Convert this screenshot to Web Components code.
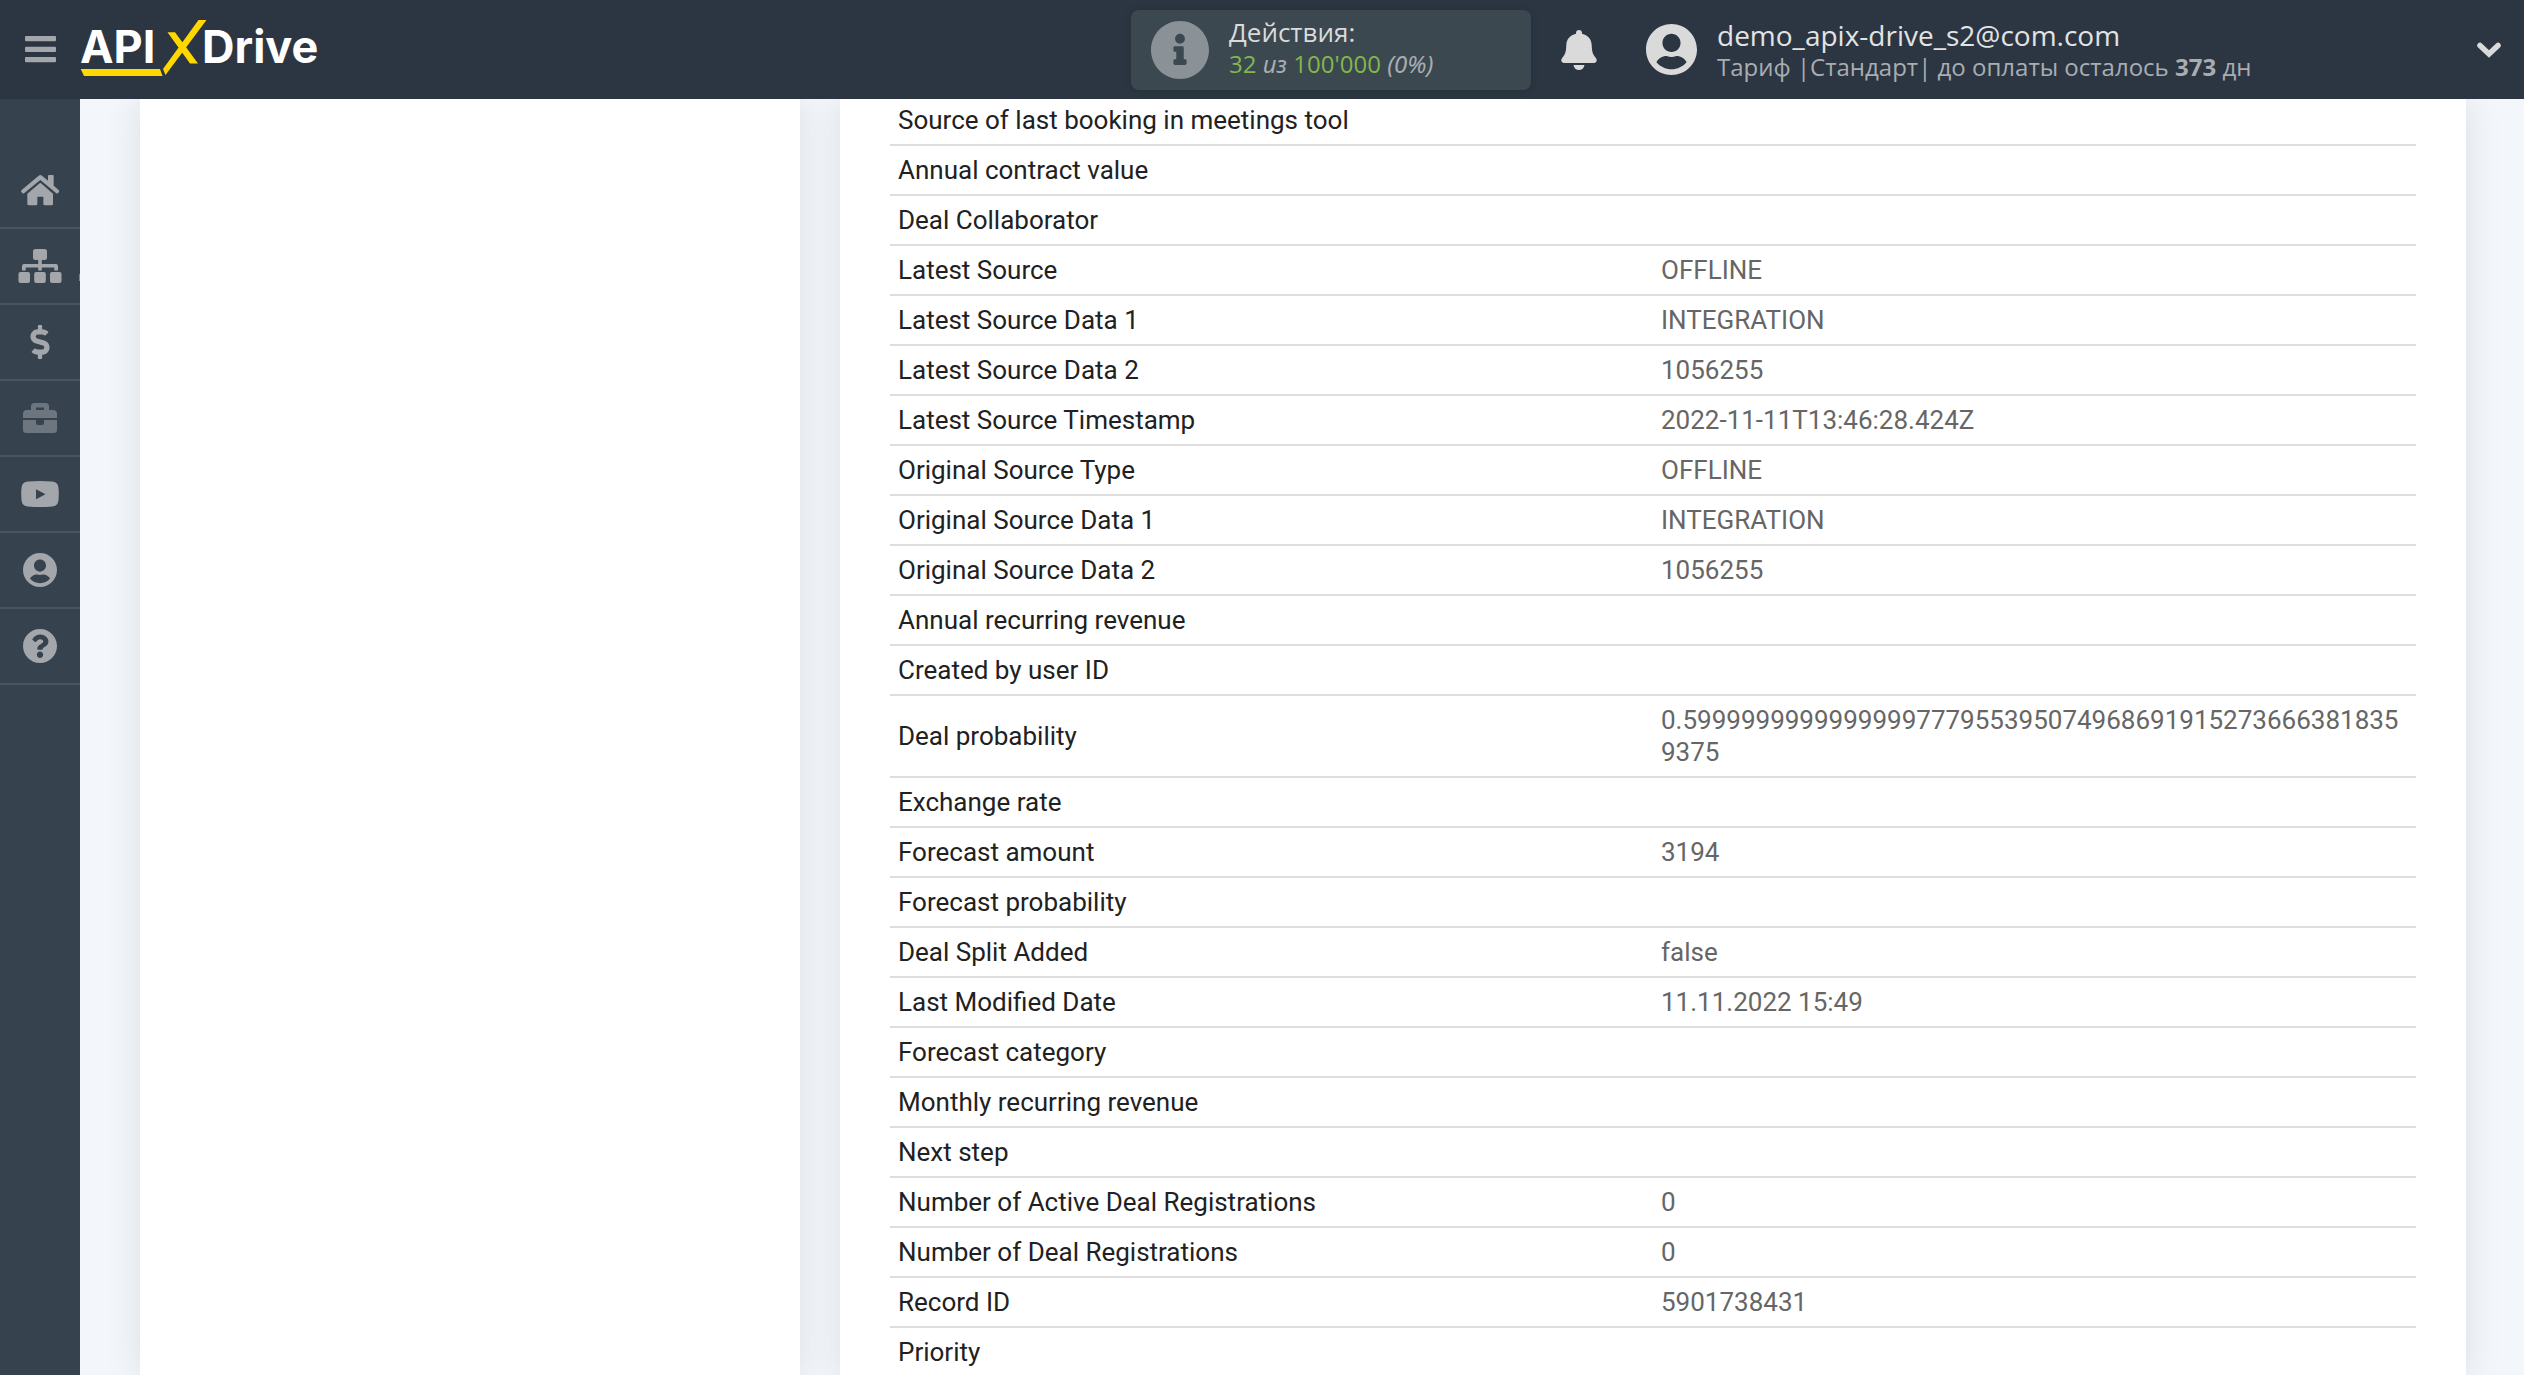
<!DOCTYPE html>
<html lang="ru">
<head>
<meta charset="utf-8">
<title>ApiX-Drive</title>
<style>
html, body { margin: 0; height: 100%; }
body { overflow: hidden; background: #f3f6fb; font-family: "Open Sans", "Noto Sans", sans-serif; }
</style>
</head>
<body>
<app-shell>
  <app-header slot="header"></app-header>
  <app-sidebar slot="sidebar"></app-sidebar>
  <app-card></app-card>
  <app-card><deal-table></deal-table></app-card>
</app-shell>

<script>
const ICONS = {
  user: '<svg viewBox="0 8 496 496"><path d="M248 8C111 8 0 119 0 256s111 248 248 248 248-111 248-248S385 8 248 8zm0 96c48.600 0 88 39.400 88 88s-39.400 88-88 88-88-39.400-88-88 39.400-88 88-88zm0 344c-58.700 0-111.300-26.600-146.500-68.200 18.800-35.400 55.600-59.800 98.500-59.800 2.400 0 4.800.4 7.100 1.100 13 4.200 26.600 6.900 40.900 6.900 14.300 0 28-2.700 40.900-6.900 2.300-.7 4.700-1.100 7.100-1.100 42.900 0 79.700 24.400 98.500 59.800C359.300 421.400 306.700 448 248 448z"/></svg>',
  info: '<svg viewBox="8 8 496 496"><path d="M256 8C119.043 8 8 119.083 8 256c0 136.997 111.043 248 248 248s248-111.003 248-248C504 119.083 392.957 8 256 8zm0 110c23.196 0 42 18.804 42 42s-18.804 42-42 42-42-18.804-42-42 18.804-42 42-42zm56 254c0 6.627-5.373 12-12 12h-88c-6.627 0-12-5.373-12-12v-24c0-6.627 5.373-12 12-12h12v-64h-12c-6.627 0-12-5.373-12-12v-24c0-6.627 5.373-12 12-12h64c6.627 0 12 5.373 12 12v100h12c6.627 0 12 5.373 12 12v24z"/></svg>',
  help: '<svg viewBox="8 8 496 496"><path d="M504 256c0 136.997-111.043 248-248 248S8 392.997 8 256C8 119.083 119.043 8 256 8s248 111.083 248 248zM262.655 90c-54.497 0-89.255 22.957-116.549 63.758-3.536 5.286-2.353 12.415 2.715 16.258l34.699 26.310c5.205 3.947 12.621 3.008 16.665-2.122 17.864-22.658 30.113-35.797 57.303-35.797 20.429 0 45.698 13.148 45.698 32.958 0 14.976-12.363 22.667-32.534 33.976C247.128 238.528 216 254.941 216 296v4c0 6.627 5.373 12 12 12h56c6.627 0 12-5.373 12-12v-1.333c0-28.462 83.186-29.647 83.186-106.667 0-58.002-60.165-102-116.531-102zM256 338c-25.365 0-46 20.635-46 46 0 25.364 20.635 46 46 46s46-20.636 46-46c0-25.365-20.635-46-46-46z"/></svg>',
  home: '<svg viewBox="60 522 120 96"><path d="M144 528q0-3 3-3h11q3 0 3 3v29l15 13q3 3 1 6l-3 3q-3 3-6 0L121 540 73 579q-3 3-6 0l-3-3q-2-3 1-6L116 527q5-4 10 0l18 15z"/><path d="M82 581L119 550q2-2 4 0l36 31v31q0 4-4 4h-21q-4 0-4-4v-22h-18v22q0 4-4 4H86q-4 0-4-4z"/></svg>',
  sitemap: '<svg viewBox="0 0 44 36"><rect x="15" y="1" width="14" height="11" rx="2.500"/><rect x=".5" y="24" width="11.500" height="11" rx="2"/><rect x="16.200" y="24" width="11.600" height="11" rx="2"/><rect x="32" y="24" width="11.500" height="11" rx="2"/><path d="M20.200 11h3.600v5H38q2 0 2 2v4.500h-3.700V19.500H23.800v3h-3.600v-3H7.700v3H4V18q0-2 2-2h14.200z"/></svg>',
  dollar: '<svg viewBox="0 0 288 512"><path d="M209.200 233.400l-108-31.600C88.700 198.200 80 186.500 80 173.500c0-16.300 13.200-29.500 29.500-29.500h66.300c12.200 0 24.200 3.700 34.200 10.500 6.100 4.100 14.300 3.100 19.500-2l34.800-34c7.100-6.900 6.100-18.400-1.800-24.500C238 74.800 207.400 64.100 176 64V16c0-8.800-7.200-16-16-16h-32c-8.800 0-16 7.200-16 16v48h-2.500C45.800 64-5.400 118.700.5 183.600c4.200 46.100 39.400 83.600 83.800 96.600l102.500 30c12.500 3.700 21.200 15.300 21.200 28.300 0 16.300-13.200 29.500-29.500 29.500h-66.300C100 368 88 364.300 78 357.500c-6.100-4.100-14.300-3.100-19.500 2l-34.800 34c-7.100 6.900-6.100 18.400 1.800 24.500 24.500 19.200 55.100 29.900 86.500 30v48c0 8.800 7.200 16 16 16h32c8.800 0 16-7.200 16-16v-48.200c46.600-.9 90.300-28.600 105.700-72.700 21.500-61.600-14.600-124.800-72.500-141.700z"/></svg>',
  toolbox: '<svg viewBox="0 0 34 30"><path fill-rule="evenodd" d="M8 7V3.500Q8 0 11.500 0h11Q26 0 26 3.500V7h4q4 0 4 4v4H0v-4q0-4 4-4zM13 4.500V7h8V4.500z"/><path d="M0 17h13v3q0 2 2 2h4q2 0 2-2v-3h13v10q0 3-3 3H3q-3 0-3-3z"/></svg>',
  video: '<svg viewBox="0 0 38 26"><path fill-rule="evenodd" d="M7 .6Q19-.4 31 .6q6 .4 6.400 6 .8 6.400 0 12.800-.4 5.600-6.400 6-12 1-24 0-6-.4-6.400-6-.8-6.400 0-12.800Q1 1 7 .6zM15 8.200v10l9.500-5z"/></svg>',
  bell: '<svg viewBox="0 0 36 40"><path d="M18 0c1.800 0 3 1.200 3 2.800v1C27 5.200 30.500 9.500 30.700 15c.3 7 1 9.500 4 12.700 1.700 2 1.400 5.300-1.900 5.300H3.200C-.1 33-.4 29.700 1.300 27.700c3-3.200 3.700-5.700 4-12.700C5.500 9.500 9 5.200 15 3.800v-1C15 1.200 16.200 0 18 0zM12.500 35h11c-.4 3-2.600 5-5.500 5s-5.100-2-5.500-5z"/></svg>',
  bars: '<svg viewBox="0 0 31 27"><rect width="31" height="5.300" rx="1"/><rect y="10.700" width="31" height="5.300" rx="1"/><rect y="21" width="31" height="5.300" rx="1"/></svg>',
  chevron: '<svg viewBox="0 0 26 17"><path d="M4 4.500l9 8.500 9-8.500" fill="none" stroke="currentColor" stroke-width="5.500" stroke-linecap="round"/></svg>'
};

class AppShell extends HTMLElement {
  constructor() {
    super();
    this.attachShadow({ mode: 'open' }).innerHTML = `
      <style>
        :host { display: flex; flex-direction: column; height: 100vh; }
        .body { flex: 1; min-height: 0; display: flex; }
        main { flex: 1; min-width: 0; overflow: hidden; display: grid;
          grid-template-columns: minmax(0, 660px) minmax(0, 1fr); gap: 40px; padding: 0 58px 0 60px; }
      </style>
      <slot name="header"></slot>
      <div class="body"><slot name="sidebar"></slot><main><slot></slot></main></div>`;
  }
}

class AppHeader extends HTMLElement {
  constructor() {
    super();
    this.attachShadow({ mode: 'open' }).innerHTML = `
      <style>
        :host { display: block; background: #2b3642; color: #dadada; }
        header { display: grid; grid-template-columns: 1131fr 400px 993fr; align-items: center; height: 99px; }
        svg { display: block; fill: currentColor; }
        button { display: block; margin: 0; padding: 0; border: 0; background: none; color: inherit; font: inherit; cursor: pointer; }
        .left { display: flex; align-items: center; gap: 24px; padding-left: 25px; }
        .menu { color: #a3a7ab; } .menu svg { width: 31px; height: 27px; }
        .logo svg { width: 246px; height: 60px; }
        .limits { display: flex; align-items: center; gap: 20px; box-sizing: border-box; height: 80px; padding-left: 20px;
          background: #3b4850; border-radius: 8px; box-shadow: 0 0 8px rgba(0,0,0,.12); }
        .limits svg { width: 58px; height: 58px; color: #8a9197; }
        .limits div { padding-bottom: 4px; }
        p { margin: 0; white-space: nowrap; line-height: 32px; }
        .title { font-size: 26px; }
        .sub { font-size: 24px; color: #a9adb1; }
        .sub b.n { font-weight: 400; color: #82b74b; }
        .sub i { font-family: "Noto Sans", sans-serif; }
        .right { display: flex; align-items: center; padding: 0 22px 0 30px; }
        .bell svg { width: 36px; height: 40px; }
        .user { display: flex; align-items: center; gap: 20px; margin-left: 49px; color: #e2e3e4; text-decoration: none; }
        .user svg { width: 51px; height: 51px; color: #dadada; }
        .user div { padding-top: 2px; }
        .user .title { font-size: 28px; }
        .more { margin-left: auto; } .more svg { width: 26px; height: 17px; }
      </style>
      <header>
        <div class="left">
          <button class="menu" aria-label="Меню">${ICONS.bars}</button>
          <a class="logo" href="#" aria-label="APIXDrive">
            <svg viewBox="80 19 246 60">
              <g fill="#fff" font-family="Inter, sans-serif" font-weight="700" font-size="45">
                <text x="80" y="62">API</text><text x="202" y="62">Drive</text>
              </g>
              <path fill="#ffd800" d="M80.700 68H160l2.500 7H84zM198.500 19h8L165.500 74l-2.500-6zM167.500 31.300h7.500L198 62.500h-8z"/>
            </svg>
          </a>
        </div>
        <div class="limits">${ICONS.info}
          <div><p class="title">Действия:</p><p class="sub"><b class="n">32</b> <i>из</i> <b class="n">100'000</b> <i>(0%)</i></p></div>
        </div>
        <div class="right">
          <button class="bell" aria-label="Уведомления">${ICONS.bell}</button>
          <a class="user" href="#">${ICONS.user}
            <div><p class="title">demo_apix-drive_s2@com.com</p><p class="sub">Тариф |Стандарт| до оплаты осталось <b>373</b> дн</p></div>
          </a>
          <button class="more" aria-label="Ещё">${ICONS.chevron}</button>
        </div>
      </header>`;
  }
}

class AppSidebar extends HTMLElement {
  constructor() {
    super();
    const items = [['home','Главная',40,32],['sitemap','Связи',44,36],['dollar','Оплата',20,34],['toolbox','Инструменты',34,30],
      ['video','Видео',38,26],['user','Профиль',34,34],['help','Помощь',34,34]];
    this.attachShadow({ mode: 'open' }).innerHTML = `
      <style>
        :host { display: block; flex: none; width: 80px; background: #37424f; }
        nav { display: flex; flex-direction: column; padding-top: 54px; }
        a { position: relative; display: flex; align-items: center; justify-content: center; height: 74px; border-bottom: 2px solid #4a5562; color: #a3a7ab; }
        svg { display: block; fill: currentColor; }
        .toolbox { color: #6d757e; }
        .sitemap::after { content: ""; position: absolute; right: 0; top: 45px; width: 1px; height: 7px; background: #7b838b; }
      </style>
      <nav>${items.map(([k, label, w, h]) =>
        `<a class="${k}" href="#" aria-label="${label}">${ICONS[k].replace('<svg', `<svg width="${w}" height="${h}"`)}</a>`).join('')}</nav>`;
  }
}

class AppCard extends HTMLElement {
  constructor() {
    super();
    this.attachShadow({ mode: 'open' }).innerHTML = `
      <style>:host { display: block; min-width: 0; padding: 0 50px; background: #fff; box-shadow: 0 0 35px rgba(0,0,0,.1); }</style>
      <slot></slot>`;
  }
}

const ROWS = [
  ['Source of last booking in meetings tool', ''],
  ['Annual contract value', ''],
  ['Deal Collaborator', ''],
  ['Latest Source', 'OFFLINE'],
  ['Latest Source Data 1', 'INTEGRATION'],
  ['Latest Source Data 2', '1056255'],
  ['Latest Source Timestamp', '2022-11-11T13:46:28.424Z'],
  ['Original Source Type', 'OFFLINE'],
  ['Original Source Data 1', 'INTEGRATION'],
  ['Original Source Data 2', '1056255'],
  ['Annual recurring revenue', ''],
  ['Created by user ID', ''],
  ['Deal probability', '0.59999999999999997779553950749686919152736663818359375'],
  ['Exchange rate', ''],
  ['Forecast amount', '3194'],
  ['Forecast probability', ''],
  ['Deal Split Added', 'false'],
  ['Last Modified Date', '11.11.2022 15:49'],
  ['Forecast category', ''],
  ['Monthly recurring revenue', ''],
  ['Next step', ''],
  ['Number of Active Deal Registrations', '0'],
  ['Number of Deal Registrations', '0'],
  ['Record ID', '5901738431'],
  ['Priority', '']
];

class DealTable extends HTMLElement {
  constructor() {
    super();
    this.attachShadow({ mode: 'open' }).innerHTML = `
      <style>
        :host { display: block; font-family: Roboto, sans-serif; font-size: 26px; line-height: 32px; }
        table { width: 100%; table-layout: fixed; border-collapse: separate; border-spacing: 0; }
        th, td { padding: 8px; border-bottom: 2px solid #dedede; text-align: left; vertical-align: middle; font-weight: 400; color: #212121; }
        td { color: #666; word-break: break-all; }
        tr:first-child > * { padding-top: 5px; }
      </style>
      <table><tbody>${ROWS.map(([k, v]) => `<tr><th scope="row">${k}</th><td>${v}</td></tr>`).join('')}</tbody></table>`;
  }
}

customElements.define('app-shell', AppShell);
customElements.define('app-header', AppHeader);
customElements.define('app-sidebar', AppSidebar);
customElements.define('app-card', AppCard);
customElements.define('deal-table', DealTable);
</script>
</body>
</html>
